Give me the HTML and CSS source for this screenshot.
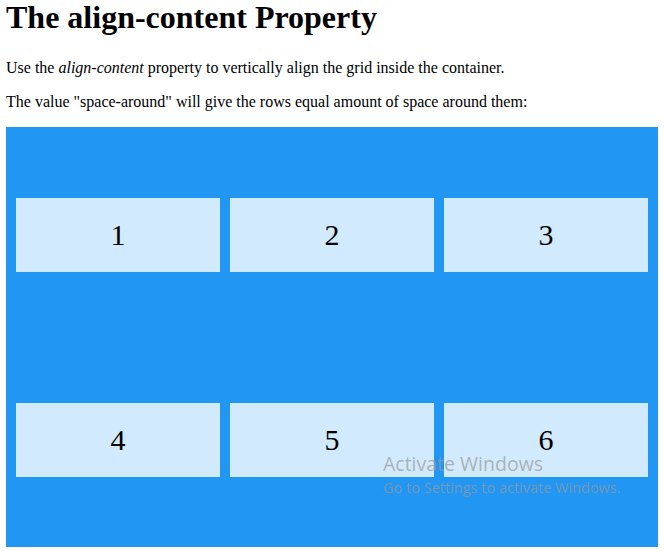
FILE: index.html
```html
<!DOCTYPE html>
<html>
<head>
<meta charset="utf-8">
<link rel="stylesheet" href="styles.css">
</head>
<body>
<h1 class="title">The align-content Property</h1>
<p class="text">Use the <em>align-content</em> property to vertically align the grid inside the container.</p>
<p class="text">The value "space-around" will give the rows equal amount of space around them:</p>
<div class="grid-container">
  <div class="cell">1</div>
  <div class="cell">2</div>
  <div class="cell">3</div>
  <div class="cell">4</div>
  <div class="cell">5</div>
  <div class="cell">6</div>
</div>
<div class="watermark">
  <div class="wm-title">Activate Windows</div>
  <div class="wm-sub">Go to Settings to activate Windows.</div>
</div>
</body>
</html>
```

FILE: styles.css
```css
html, body {
  background: #ffffff;
}
body {
  margin: 0 6px;
  font-family: "Liberation Serif", "Times New Roman", serif;
  font-size: 16px;
  color: #000;
  overflow: hidden;
}
.title {
  font-size: 32px;
  font-weight: bold;
  margin: -1.5px 0 23.5px;
}
.text {
  margin: 16px 0;
}
.grid-container {
  display: grid;
  height: 400px;
  align-content: space-around;
  grid-template-columns: auto auto auto;
  gap: 10px;
  background-color: #2196F3;
  padding: 10px;
}
.cell {
  background-color: rgba(255, 255, 255, 0.8);
  text-align: center;
  padding: 20px 0;
  font-size: 30px;
}
.watermark {
  position: absolute;
  left: 383px;
  top: 450px;
  font-family: "Open Sans", "Noto Sans", sans-serif;
  color: rgba(154, 154, 154, 0.72);
  pointer-events: none;
}
.wm-title {
  font-size: 19.5px;
  line-height: 28px;
}
.wm-sub {
  font-size: 14.5px;
  line-height: 20px;
}
```
